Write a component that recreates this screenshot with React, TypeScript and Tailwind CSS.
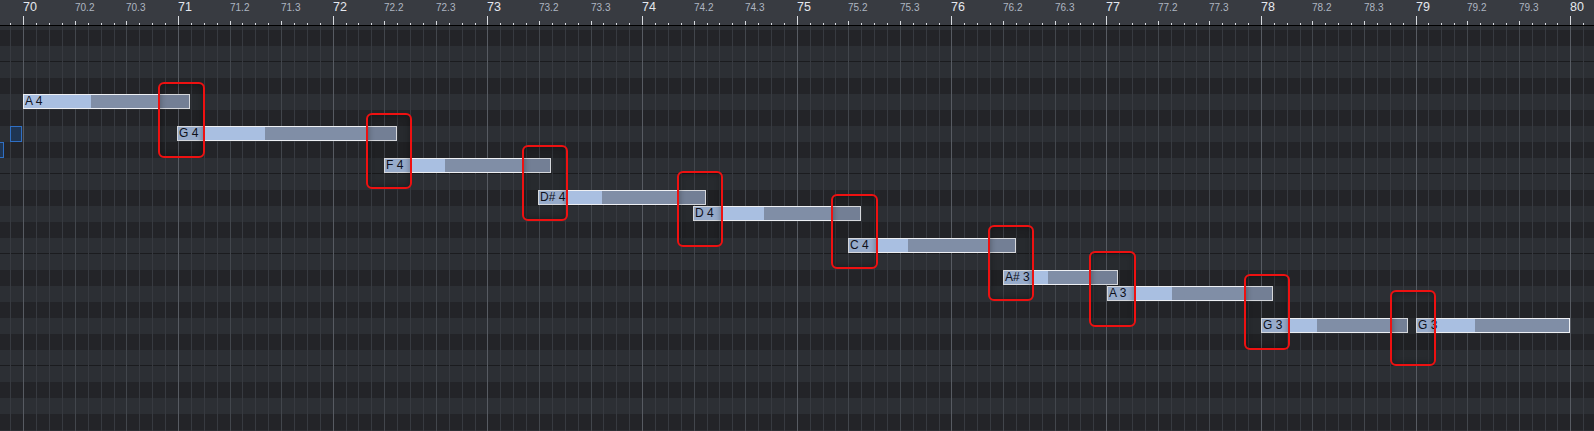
import React from "react";

const X0 = 23.3;
const BAR = 154.7;
const TICK = BAR / 12;

const notes = [
  { label: "A 4", l: 23, r: 190, t: 94, le: 91 },
  { label: "G 4", l: 177, r: 397, t: 126, le: 265 },
  { label: "F 4", l: 384, r: 551, t: 158, le: 445 },
  { label: "D# 4", l: 538, r: 706, t: 190, le: 602 },
  { label: "D 4", l: 693, r: 861, t: 206, le: 764 },
  { label: "C 4", l: 848, r: 1016, t: 238, le: 908 },
  { label: "A# 3", l: 1003, r: 1118, t: 270, le: 1048 },
  { label: "A 3", l: 1107, r: 1273, t: 286, le: 1172 },
  { label: "G 3", l: 1261, r: 1408, t: 318, le: 1317 },
  { label: "G 3", l: 1416, r: 1570, t: 318, le: 1475 },
];

const boxes = [
  { x: 158, y: 82, w: 47, h: 76 },
  { x: 366, y: 113, w: 46, h: 76 },
  { x: 522, y: 145, w: 46, h: 76 },
  { x: 677, y: 171, w: 46, h: 76 },
  { x: 831, y: 194, w: 47, h: 75 },
  { x: 988, y: 225, w: 46, h: 76 },
  { x: 1089, y: 251, w: 47, h: 76 },
  { x: 1244, y: 274, w: 46, h: 76 },
  { x: 1390, y: 290, w: 46, h: 76 },
];

const pitches: number[] = [];
for (let p = 74; p >= 48; p--) pitches.push(p);
const BLACK = [1, 3, 6, 8, 10];

const ticks: number[] = [];
for (let i = -2; i <= 122; i++) ticks.push(i);

function Ruler() {
  const labels: { x: number; text: string; bar: boolean }[] = [];
  for (let b = 0; b <= 10; b++) {
    const bx = X0 + b * BAR;
    labels.push({ x: bx, text: String(70 + b), bar: true });
    if (b < 10) {
      labels.push({ x: bx + TICK * 4, text: `${70 + b}.2`, bar: false });
      labels.push({ x: bx + TICK * 8, text: `${70 + b}.3`, bar: false });
    }
  }
  return (
    <div className="relative h-[26px] w-full shrink-0 border-b border-black bg-[#383b41]">
      <svg className="absolute left-0 top-0" width={1594} height={25} shapeRendering="crispEdges">
        {ticks.map((i) => {
          const x = Math.round(X0 + i * TICK) + 0.5;
          const y1 = i % 12 === 0 ? 16 : i % 4 === 0 ? 21 : 23;
          return <line key={i} x1={x} x2={x} y1={y1} y2={25} stroke="#d8dbe0" strokeWidth={1} />;
        })}
      </svg>
      {labels.map((lb, k) =>
        lb.bar ? (
          <span
            key={k}
            className="absolute top-[0px] font-['Liberation_Sans',Arial,sans-serif] text-[12.5px] leading-[14px] text-[#e4e8ee]"
            style={{ left: Math.round(lb.x) }}
          >
            {lb.text}
          </span>
        ) : (
          <span
            key={k}
            className="absolute top-[2px] font-['Liberation_Sans',Arial,sans-serif] text-[10px] leading-[12px] text-[#aeb6c2]"
            style={{ left: Math.round(lb.x) }}
          >
            {lb.text}
          </span>
        )
      )}
    </div>
  );
}

function Grid() {
  return (
    <div className="relative flex-1 overflow-hidden">
      <div className="-mt-[12px] flex flex-col">
        {pitches.map((p) => {
          const pc = p % 12;
          const black = BLACK.includes(pc);
          const line = pc === 0 || pc === 5;
          return (
            <div
              key={p}
              className={
                "h-[16px] shrink-0 " +
                (black ? "bg-[#232428]" : "bg-[#2c2f34]") +
                (line ? " border-b border-[#1b1c1f]" : "")
              }
            />
          );
        })}
      </div>
      <svg className="absolute left-0 top-0" width={1594} height={410} shapeRendering="crispEdges">
        {ticks.map((i) => {
          const x = Math.round(X0 + i * TICK) + 0.5;
          const c = i % 12 === 0 ? "#575b62" : i % 4 === 0 ? "#42464c" : "#373a40";
          return <line key={i} x1={x} x2={x} y1={0} y2={410} stroke={c} strokeWidth={1} />;
        })}
      </svg>
    </div>
  );
}

export default function App() {
  return (
    <div className="relative flex h-[431px] w-[1594px] flex-col overflow-hidden bg-[#25262a] font-['Liberation_Sans',Arial,sans-serif]">
      <Ruler />
      <Grid />

      <div className="absolute left-[10px] top-[126px] h-[16px] w-[12px] border border-[#2f6fc4] bg-[#1f3552]" />
      <div className="absolute left-[-8px] top-[142px] h-[16px] w-[12px] border border-[#2f6fc4] bg-[#1f3552]" />

      {notes.map((n, k) => (
        <div
          key={k}
          className="absolute flex h-[15px] border border-[#eef0f4] bg-[#808ea6]"
          style={{ left: n.l, top: n.t, width: n.r - n.l }}
        >
          <div className="h-full shrink-0 bg-[#a9bfe1]" style={{ width: n.le - n.l - 1 }} />
          <span className="absolute left-[1px] top-0 whitespace-pre text-[12px] leading-[13px] text-[#10121c]">
            {n.label}
          </span>
        </div>
      ))}

      {boxes.map((b, k) => (
        <div
          key={k}
          className="absolute rounded-[6px] border-2 border-[#ee1111] bg-black/10 shadow-[inset_0_0_6px_rgba(0,0,0,0.35)]"
          style={{ left: b.x, top: b.y, width: b.w, height: b.h }}
        />
      ))}
    </div>
  );
}
